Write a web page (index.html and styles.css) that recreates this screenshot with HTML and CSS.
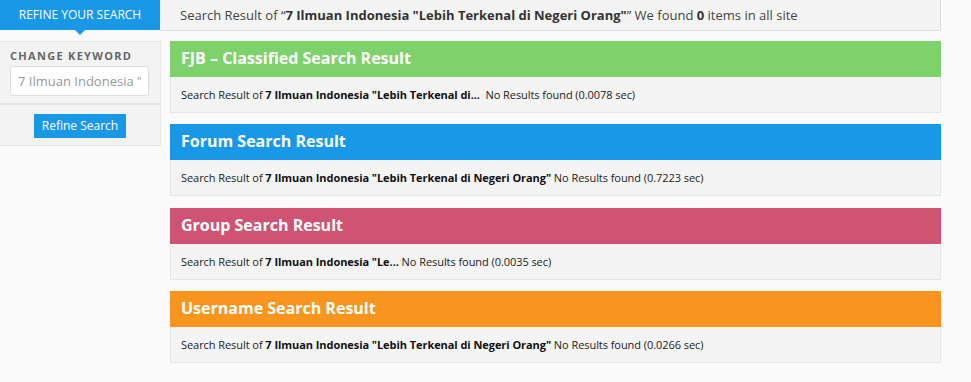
FILE: index.html
```html
<!DOCTYPE html>
<html lang="en">
<head>
    <meta charset="UTF-8">
    <title>Search Result</title>
    <link rel="stylesheet" href="styles.css">
</head>
<body>

    <!-- Top bar -->
    <div class="topbar">
        <div class="tab">REFINE YOUR SEARCH</div>
        <div class="info">Search Result of “<b>7 Ilmuan Indonesia "Lebih Terkenal di Negeri Orang"</b>” We found <b>0</b> items in all site</div>
    </div>

    <div class="page">
        <!-- Sidebar -->
        <aside class="sidebar">
            <div class="keyword">
                <h4>CHANGE KEYWORD</h4>
                <input type="text" value="7 Ilmuan Indonesia &quot;Lebih Terkenal di Negeri Orang&quot;">
            </div>
            <div class="actions">
                <button>Refine Search</button>
            </div>
        </aside>

        <!-- Results -->
        <main class="results">
            <section class="panel green">
                <h2>FJB – Classified Search Result</h2>
                <p>Search Result of <b>7 Ilmuan Indonesia "Lebih Terkenal di...</b> &nbsp;No Results found (0.0078 sec)</p>
            </section>
            <section class="panel blue">
                <h2>Forum Search Result</h2>
                <p>Search Result of <b>7 Ilmuan Indonesia "Lebih Terkenal di Negeri Orang"</b> No Results found (0.7223 sec)</p>
            </section>
            <section class="panel pink">
                <h2>Group Search Result</h2>
                <p>Search Result of <b>7 Ilmuan Indonesia "Le...</b> No Results found (0.0035 sec)</p>
            </section>
            <section class="panel orange">
                <h2>Username Search Result</h2>
                <p>Search Result of <b>7 Ilmuan Indonesia "Lebih Terkenal di Negeri Orang"</b> No Results found (0.0266 sec)</p>
            </section>
        </main>
    </div>

</body>
</html>
```

FILE: styles.css
```css
/* Reset */
* {
    margin: 0;
    padding: 0;
    box-sizing: border-box;
}

body {
    font-family: 'Open Sans', 'Liberation Sans', sans-serif;
    background-color: #fafafa;
    color: #333;
    width: 941px;
}

/* Top bar */
.topbar {
    display: flex;
    height: 31px;
}

.tab {
    position: relative;
    width: 160px;
    height: 30px;
    background-color: #1a98e8;
    color: #fff;
    font-size: 12px;
    line-height: 30px;
    text-align: center;
}

.tab::after {
    content: '';
    position: absolute;
    left: 75px;
    top: 30px;
    border-left: 5px solid transparent;
    border-right: 5px solid transparent;
    border-top: 5px solid #1a98e8;
}

.info {
    flex: 1;
    background-color: #f4f4f4;
    border-bottom: 1px solid #ddd;
    border-right: 1px solid #ddd;
    font-size: 13px;
    line-height: 30px;
    padding-left: 20px;
    color: #444;
}

.info b {
    color: #333;
}

/* Layout */
.page {
    display: flex;
    gap: 9px;
    padding-top: 10px;
}

/* Sidebar */
.sidebar {
    width: 161px;
    align-self: flex-start;
    background-color: #f3f3f3;
    border: 1px solid #e6e6e6;
    border-left: none;
}

.keyword {
    padding: 7px 11px 7px 10px;
    border-bottom: 2px solid #e4e4e4;
}

.keyword h4 {
    font-size: 11px;
    letter-spacing: 1.3px;
    color: #666;
    line-height: 14px;
    margin-bottom: 3px;
}

.keyword input {
    width: 139px;
    height: 30px;
    border: 1px solid #ddd;
    border-radius: 3px;
    background-color: #fff;
    font-family: inherit;
    font-size: 13px;
    color: #999;
    padding: 0 7px;
    outline: none;
}

.actions {
    padding: 8px 0 7px;
    text-align: center;
}

.actions button {
    width: 92px;
    height: 24px;
    border: none;
    background-color: #1a98e8;
    color: #fff;
    font-family: inherit;
    font-size: 12px;
}

/* Result panels */
.results {
    flex: 1;
    display: flex;
    flex-direction: column;
    gap: 11.4px;
}

.panel {
    background-color: #f4f4f4;
    border: 1px solid #e6e6e6;
}

.panel h2 {
    height: 36px;
    margin: -1px -1px 0;
    padding-left: 11px;
    font-size: 16px;
    line-height: 35px;
    color: #fff;
}

.panel p {
    font-size: 11px;
    letter-spacing: -0.06px;
    line-height: 35px;
    padding-left: 10px;
    color: #222;
}

.panel p b {
    color: #111;
}

.green h2 { background-color: #7dd26b; }
.blue h2 { background-color: #1a98e8; }
.pink h2 { background-color: #cf5474; }
.orange h2 { background-color: #f7951f; }
```
